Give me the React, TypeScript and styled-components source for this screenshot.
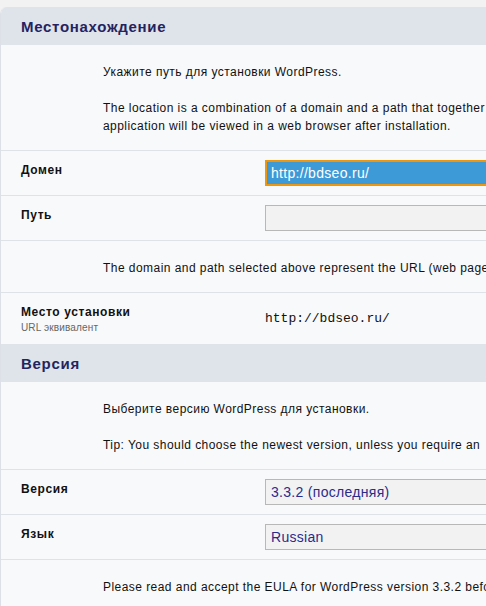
import React from "react";
import styled, { createGlobalStyle } from "styled-components";

const Global = createGlobalStyle`
  html, body {
    margin: 0;
    padding: 0;
    background: #f2f2f2;
    overflow: hidden;
  }
  body {
    font-family: "Liberation Sans", Arial, sans-serif;
    font-size: 12px;
    color: #111;
  }
`;

const Page = styled.div`
  padding-top: 7px;
  width: 700px;
`;

const Panel = styled.section`
  background: #f8f9fb;
  border-left: 1px solid #dde1e7;
  border-top-left-radius: 7px;
  overflow: hidden;
`;

const Header = styled.h2`
  margin: 0;
  height: 38px;
  display: flex;
  align-items: center;
  padding-left: 20px;
  background: #dfe3ea;
  color: #25235f;
  font-family: "Liberation Sans", Arial, sans-serif;
  font-size: 15px;
  font-weight: bold;
  letter-spacing: 0.7px;
`;

const Desc = styled.div`
  padding: 18px 0 15px 102px;
  border-bottom: 1px solid #dfe3e8;
  line-height: 18px;
  letter-spacing: 0.45px;
  white-space: nowrap;
`;

const Para = styled.p`
  margin: 0;
  & + & {
    margin-top: 18px;
  }
`;

const Row = styled.div<{ $center?: boolean; $last?: boolean }>`
  display: flex;
  align-items: ${(p) => (p.$center ? "center" : "flex-start")};
  padding: ${(p) => (p.$center ? "10px 0" : "9px 0")};
  border-bottom: ${(p) => (p.$last ? "none" : "1px solid #dfe3e8")};
`;

const Label = styled.div<{ $center?: boolean }>`
  width: 244px;
  padding-left: 20px;
  padding-top: ${(p) => (p.$center ? "0" : "1px")};
  flex: none;
`;

const LabelText = styled.div`
  font-weight: bold;
  line-height: 18px;
  letter-spacing: 0.6px;
`;

const Hint = styled.div`
  font-size: 10px;
  line-height: 13px;
  color: #666;
  letter-spacing: 0.15px;
`;

const Field = styled.div<{ $active?: boolean }>`
  box-sizing: border-box;
  width: 320px;
  height: 26px;
  display: flex;
  align-items: center;
  padding-left: ${(p) => (p.$active ? "4px" : "5px")};
  font-size: 14px;
  letter-spacing: 0.3px;
  background: ${(p) => (p.$active ? "#3d9ad6" : "#f2f2f2")};
  border: ${(p) => (p.$active ? "2px solid #ef960f" : "1px solid #b8b8b8")};
  color: ${(p) => (p.$active ? "#fff" : "#2b2b8c")};
`;

const Mono = styled.div`
  font-family: "Liberation Mono", "Courier New", monospace;
  font-size: 13px;
  color: #111;
`;

export default function App() {
  return (
    <Page>
      <Global />
      <Panel>
        <Header>Местонахождение</Header>
        <Desc>
          <Para>Укажите путь для установки WordPress.</Para>
          <Para>
            The location is a combination of a domain and a path that together
            <br />
            application will be viewed in a web browser after installation.
          </Para>
        </Desc>
        <Row>
          <Label>
            <LabelText>Домен</LabelText>
          </Label>
          <Field $active>http://bdseo.ru/</Field>
        </Row>
        <Row>
          <Label>
            <LabelText>Путь</LabelText>
          </Label>
          <Field />
        </Row>
        <Desc>
          <Para>The domain and path selected above represent the URL (web page</Para>
        </Desc>
        <Row $center $last>
          <Label $center>
            <LabelText>Место установки</LabelText>
            <Hint>URL эквивалент</Hint>
          </Label>
          <Mono>http://bdseo.ru/</Mono>
        </Row>
        <Header>Версия</Header>
        <Desc>
          <Para>Выберите версию WordPress для установки.</Para>
          <Para>Tip: You should choose the newest version, unless you require an</Para>
        </Desc>
        <Row>
          <Label>
            <LabelText>Версия</LabelText>
          </Label>
          <Field>3.3.2 (последняя)</Field>
        </Row>
        <Row>
          <Label>
            <LabelText>Язык</LabelText>
          </Label>
          <Field>Russian</Field>
        </Row>
        <Desc>
          <Para>Please read and accept the EULA for WordPress version 3.3.2 before</Para>
        </Desc>
      </Panel>
    </Page>
  );
}
